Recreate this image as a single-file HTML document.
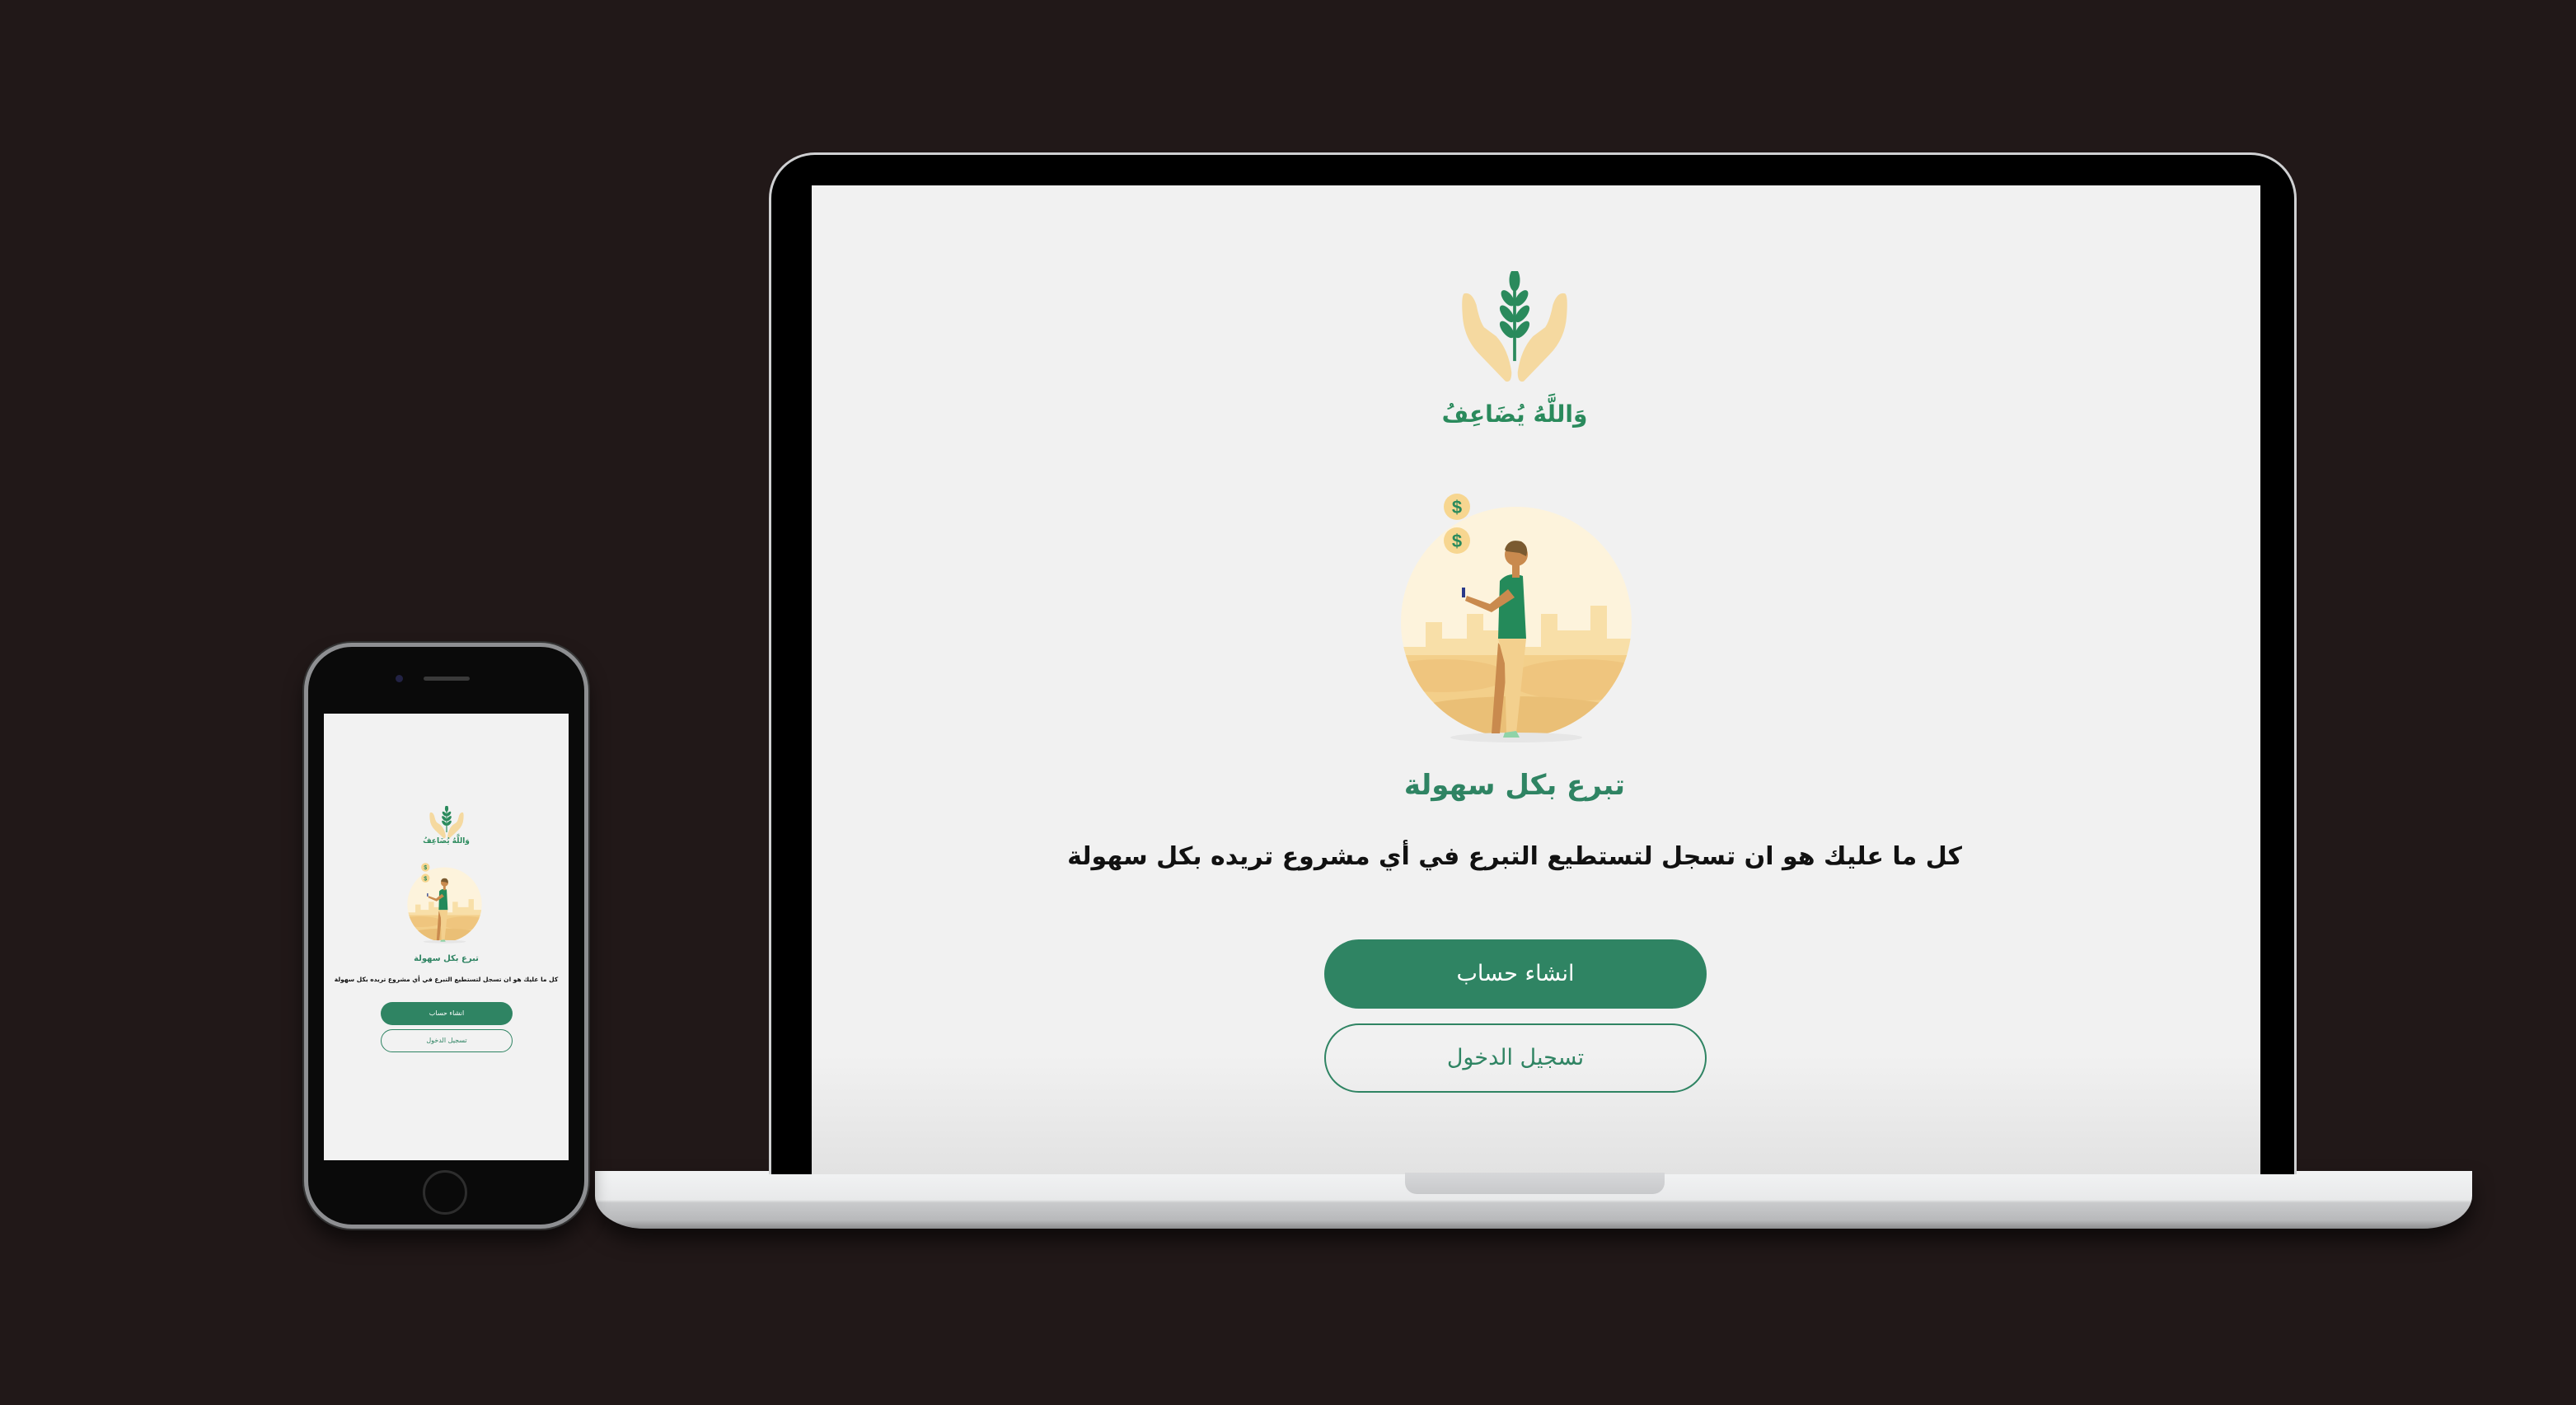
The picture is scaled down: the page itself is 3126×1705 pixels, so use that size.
<!DOCTYPE html>
<html><head><meta charset="utf-8">
<style>
*{margin:0;padding:0;box-sizing:border-box}
body{width:3126px;height:1705px;background:#211818;position:relative;overflow:hidden;font-family:"DejaVu Sans","Liberation Sans",sans-serif}
.abs{position:absolute}
.t{position:absolute;left:0;right:0;text-align:center;direction:rtl;white-space:nowrap}
.lt{right:52px}
</style></head><body>
<svg width="0" height="0" style="position:absolute">
<defs>
<g id="logo">
 <path d="M4 20 Q0 22 2 40 Q4 60 24 74 L58 98 Q66 100 66 90 Q62 70 46 58 L30 50 Q24 44 20 30 Q14 18 4 20Z" fill="#f5d9a0"/>
 <path d="M136 20 Q140 22 138 40 Q136 60 116 74 L82 98 Q74 100 74 90 Q78 70 94 58 L110 50 Q116 44 120 30 Q126 18 136 20Z" fill="#f5d9a0"/>
 <rect x="68" y="10" width="4" height="70" fill="#2a8a5c"/>
 <ellipse cx="70" cy="8" rx="7" ry="10" fill="#2a8a5c"/>
 <g fill="#2a8a5c">
  <ellipse cx="61" cy="24" rx="10" ry="5" transform="rotate(35 61 24)"/>
  <ellipse cx="79" cy="24" rx="10" ry="5" transform="rotate(-35 79 24)"/>
  <ellipse cx="60" cy="38" rx="11" ry="5" transform="rotate(35 60 38)"/>
  <ellipse cx="80" cy="38" rx="11" ry="5" transform="rotate(-35 80 38)"/>
  <ellipse cx="60" cy="52" rx="11" ry="5" transform="rotate(35 60 52)"/>
  <ellipse cx="80" cy="52" rx="11" ry="5" transform="rotate(-35 80 52)"/>
 </g>
</g>
<clipPath id="cc"><circle cx="150" cy="160" r="140"/></clipPath>
<g id="illus">
 <circle cx="150" cy="160" r="140" fill="#fdf3dc"/>
 <g clip-path="url(#cc)">
  <path d="M0 190 H40 V160 H60 V180 H90 V150 H110 V170 H140 V190 H180 V150 H200 V170 H240 V140 H260 V180 H300 V300 H0Z" fill="#f8dfa8"/>
  <rect x="0" y="200" width="300" height="100" fill="#f3cf8a"/>
  <ellipse cx="60" cy="225" rx="80" ry="20" fill="#efc57e"/>
  <ellipse cx="230" cy="230" rx="90" ry="25" fill="#efc57e"/>
  <ellipse cx="150" cy="280" rx="150" ry="30" fill="#eabf76"/>
 </g>
 <ellipse cx="150" cy="300" rx="80" ry="6" fill="#e6e6e6"/>
 <circle cx="78" cy="20" r="16" fill="#f7d690"/><text x="78" y="28" text-anchor="middle" font-size="22" font-weight="bold" fill="#2a8a5c" font-family="Liberation Sans">$</text>
 <circle cx="78" cy="61" r="16" fill="#f7d690"/><text x="78" y="69" text-anchor="middle" font-size="22" font-weight="bold" fill="#2a8a5c" font-family="Liberation Sans">$</text>
 <path d="M128 185 L120 295 L130 295 L140 200Z" fill="#c98a4e"/>
 <path d="M128 180 L162 180 L150 295 L138 295 L136 210Z" fill="#f3d08e"/>
 <path d="M130 110 Q140 98 158 104 L162 180 L128 180Z" fill="#248a5a"/>
 <path d="M140 120 L118 138 L90 128 L88 134 L120 148 L148 130Z" fill="#c98a4e"/>
 <rect x="84" y="118" width="4" height="12" fill="#2a3a8a"/>
 <circle cx="150" cy="78" r="14" fill="#c98a4e"/>
 <path d="M136 72 Q140 58 156 62 Q166 68 162 80 L154 76 L138 74Z" fill="#7a5a30"/>
 <rect x="145" y="88" width="9" height="18" fill="#c98a4e"/>
 <path d="M136 294 L150 292 L154 300 L134 300Z" fill="#8fd3a8"/>
</g>
</defs>
</svg>

<!-- laptop -->
<div class="abs" style="left:722px;top:1421px;width:2278px;height:70px;border-radius:0 0 60px 60px/0 0 40px 40px;background:linear-gradient(#f2f3f4 0,#e8e9ea 50%,#c9cacc 55%,#b8b9bb 85%,#8d8e90 100%);box-shadow:0 14px 24px rgba(0,0,0,.6)"></div>
<div class="abs" style="left:933px;top:185px;width:1854px;height:1240px;border-radius:56px 56px 0 0;background:#000;border:3px solid #cfd0d2;border-bottom:none"></div>
<div class="abs" style="left:985px;top:225px;width:1758px;height:1200px;background:linear-gradient(#f1f1f1 0,#f1f1f1 88%,#e2e2e2 100%)">
 <svg class="abs" style="left:788px;top:104px" width="130" height="150" viewBox="0 0 140 110" preserveAspectRatio="none"><use href="#logo"/></svg>
 <div class="t lt" style="top:261px;font-size:28px;font-weight:bold;color:#2a8a5c">وَاللَّهُ يُضَاعِفُ</div>
 <svg class="abs" style="left:705px;top:370px" width="300" height="310" viewBox="0 0 300 310"><use href="#illus"/></svg>
 <div class="t lt" style="top:708px;font-size:34px;font-weight:bold;color:#2f8463">تبرع بكل سهولة</div>
 <div class="t lt" style="top:797px;font-size:30px;font-weight:bold;color:#111">كل ما عليك هو ان تسجل لتستطيع التبرع في أي مشروع تريده بكل سهولة</div>
 <div class="abs" style="left:622px;top:915px;width:464px;height:84px;border-radius:42px;background:#2f8463;color:#fff;font-size:27px;text-align:center;line-height:84px;direction:rtl">انشاء حساب</div>
 <div class="abs" style="left:622px;top:1017px;width:464px;height:84px;border-radius:42px;border:2px solid #2f8463;color:#2f8463;font-size:27px;text-align:center;line-height:80px;direction:rtl">تسجيل الدخول</div>
</div>
<div class="abs" style="left:1705px;top:1423px;width:315px;height:26px;border-radius:0 0 14px 14px;background:linear-gradient(#d6d7d9,#c8c9cb)"></div>

<!-- phone -->
<div class="abs" style="left:369px;top:780px;width:345px;height:711px;border-radius:58px;background:#0a0a0a;border:5px solid #8e8f92;box-shadow:0 0 0 2px #333,0 16px 24px rgba(0,0,0,.6)"></div>
<div class="abs" style="left:480px;top:819px;width:9px;height:9px;border-radius:50%;background:#222244"></div>
<div class="abs" style="left:514px;top:821px;width:56px;height:5px;border-radius:3px;background:#3a3a3a"></div>
<div class="abs" style="left:513px;top:1420px;width:54px;height:54px;border-radius:50%;border:3px solid #2d2d2d"></div>
<div class="abs" style="left:393px;top:866px;width:297px;height:542px;background:#f2f2f2;overflow:hidden">
 <svg class="abs" style="left:128px;top:112px" width="42" height="44" viewBox="0 0 140 110" preserveAspectRatio="none"><use href="#logo"/></svg>
 <div class="t" style="top:150px;font-size:9px;font-weight:bold;color:#2a8a5c">وَاللَّهُ يُضَاعِفُ</div>
 <svg class="abs" style="left:98px;top:180px" width="97" height="100" viewBox="0 0 300 310"><use href="#illus"/></svg>
 <div class="t" style="top:292px;font-size:10px;font-weight:bold;color:#2f8463">تبرع بكل سهولة</div>
 <div class="t" style="top:318px;font-size:7.5px;font-weight:bold;color:#111">كل ما عليك هو ان تسجل لتستطيع التبرع في أي مشروع تريده بكل سهولة</div>
 <div class="abs" style="left:69px;top:350px;width:160px;height:28px;border-radius:14px;background:#2f8463;color:#fff;font-size:8px;text-align:center;line-height:28px;direction:rtl">انشاء حساب</div>
 <div class="abs" style="left:69px;top:383px;width:160px;height:28px;border-radius:14px;border:1px solid #2f8463;color:#2f8463;font-size:8px;text-align:center;line-height:26px;direction:rtl">تسجيل الدخول</div>
</div>
</body></html>
